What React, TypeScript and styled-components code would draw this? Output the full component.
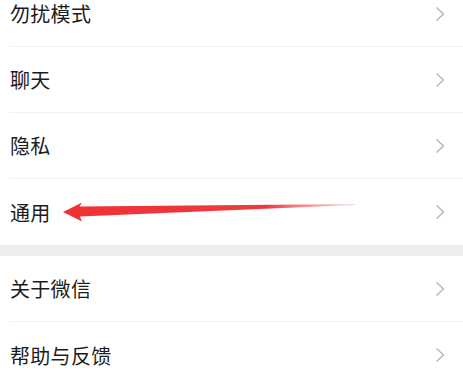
import { createGlobalStyle, styled } from "styled-components";

const GlobalStyle = createGlobalStyle`
  html, body {
    margin: 0;
    padding: 0;
    background: #ffffff;
    overflow: hidden;
  }
  body {
    font-family: "Noto Sans CJK SC", "Noto Sans", sans-serif;
  }
`;

const groups = [
  ["勿扰模式", "聊天", "隐私", "通用"],
  ["关于微信", "帮助与反馈"],
];

const App = () => {
  return (
    <Page>
      <GlobalStyle />
      <List>
        {groups.map((items, gi) => (
          <Group key={gi} $first={gi === 0}>
            {items.map((label, i) => (
              <Item key={label}>
                <ItemInner $last={i === items.length - 1}>
                  <Label>{label}</Label>
                  <Chevron viewBox="0 0 10 16">
                    <path d="M1.5 1.5 L8.5 8 L1.5 14.5" />
                  </Chevron>
                </ItemInner>
              </Item>
            ))}
          </Group>
        ))}
      </List>
      <Arrow viewBox="60 196 300 30">
        <defs>
          <linearGradient id="tail" x1="60" y1="0" x2="356" y2="0" gradientUnits="userSpaceOnUse">
            <stop offset="0" stopColor="#ee3236" />
            <stop offset="0.7" stopColor="#ee3a3e" />
            <stop offset="1" stopColor="#f4a0a2" stopOpacity="0.4" />
          </linearGradient>
        </defs>
        <path
          d="M63 212 L82 202.5 L79.5 206.5 L355 204 L355 205 L80 216.5 L82 221.5 Z"
          fill="url(#tail)"
        />
      </Arrow>
    </Page>
  );
};

export default App;

const Page = styled.div`
  position: relative;
  width: 463px;
  height: 380px;
  overflow: hidden;
  background: #ffffff;
`;

const List = styled.div`
  display: flex;
  flex-direction: column;
  margin-top: -19px;
`;

const Group = styled.div<{ $first: boolean }>`
  display: flex;
  flex-direction: column;
  background: #ffffff;
  border-top: ${(p) => (p.$first ? "none" : "11px solid #ededed")};
`;

const Item = styled.div`
  padding-left: 9px;
`;

const ItemInner = styled.div<{ $last: boolean }>`
  height: 66px;
  box-sizing: border-box;
  display: flex;
  align-items: center;
  justify-content: space-between;
  padding: 0 18px 0 1px;
  border-bottom: ${(p) => (p.$last ? "none" : "1px solid #f1f1f1")};
`;

const Label = styled.span`
  font-size: 20px;
  color: #1c1c1c;
  letter-spacing: 0.3px;
`;

const Chevron = styled.svg`
  width: 10px;
  height: 16px;
  fill: none;
  stroke: #b5b5b5;
  stroke-width: 1.4;
`;

const Arrow = styled.svg`
  position: absolute;
  left: 60px;
  top: 196px;
  width: 300px;
  height: 30px;
`;
